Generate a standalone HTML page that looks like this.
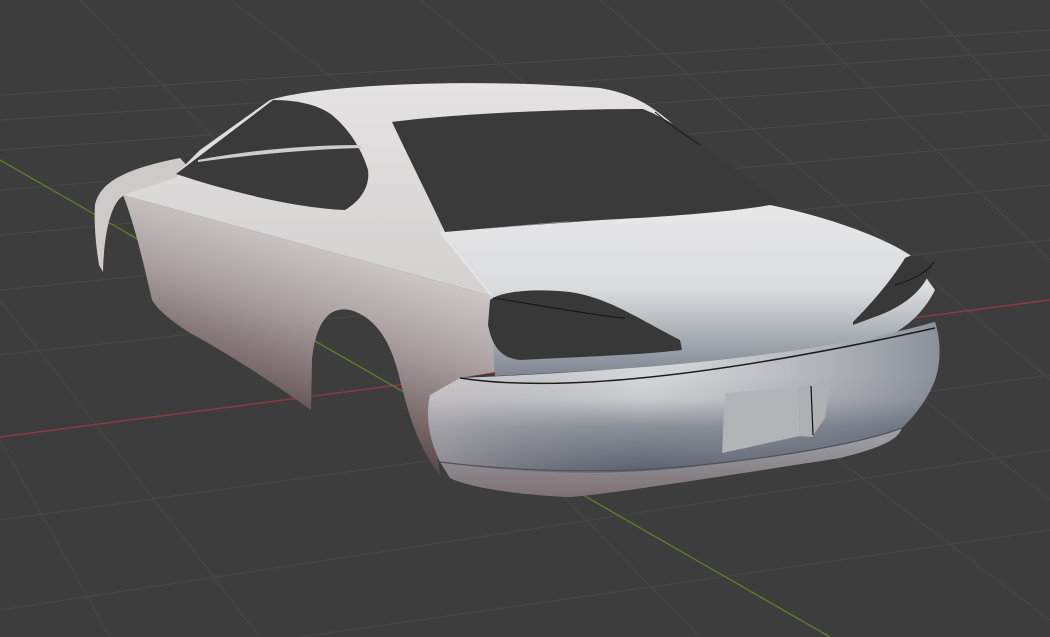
<!DOCTYPE html>
<html><head><meta charset="utf-8"><style>
html,body{margin:0;padding:0;background:#3d3d3d;overflow:hidden}
svg{display:block}
</style></head><body>
<svg width="1050" height="637" viewBox="0 0 1050 637" xmlns="http://www.w3.org/2000/svg">
<defs>
<linearGradient id="side" gradientUnits="userSpaceOnUse" x1="340" y1="230" x2="280" y2="420">
<stop offset="0" stop-color="#d4d0d0"/><stop offset="0.45" stop-color="#aa9fa0"/><stop offset="1" stop-color="#5c4a4c"/>
</linearGradient>
<linearGradient id="bump" gradientUnits="userSpaceOnUse" x1="0" y1="375" x2="0" y2="470">
<stop offset="0" stop-color="#d6d7d9"/><stop offset="0.25" stop-color="#cacbce"/><stop offset="0.55" stop-color="#8a8f98"/><stop offset="1" stop-color="#5e6370"/>
</linearGradient>
<linearGradient id="bumpH" gradientUnits="userSpaceOnUse" x1="440" y1="0" x2="940" y2="0">
<stop offset="0" stop-color="#b9b2b3" stop-opacity="0.5"/><stop offset="0.4" stop-color="#8a909a" stop-opacity="0"/><stop offset="1" stop-color="#4c5464" stop-opacity="0.55"/>
</linearGradient>
<linearGradient id="skirt" gradientUnits="userSpaceOnUse" x1="0" y1="440" x2="0" y2="500">
<stop offset="0" stop-color="#9a9ca2"/><stop offset="1" stop-color="#7c6e72"/>
</linearGradient>
<linearGradient id="trunk" gradientUnits="userSpaceOnUse" x1="0" y1="205" x2="0" y2="375">
<stop offset="0" stop-color="#e8e8e9"/><stop offset="0.5" stop-color="#dadbdd"/><stop offset="1" stop-color="#7f8792"/>
</linearGradient>
<linearGradient id="roof" x1="0" y1="0" x2="0" y2="1">
<stop offset="0" stop-color="#e4e2e2"/><stop offset="1" stop-color="#d3d0d0"/>
</linearGradient>
</defs>
<rect width="1050" height="637" fill="#3d3d3d"/>
<g stroke="#484848" stroke-width="1" fill="none">
<line x1="0" y1="95" x2="1050" y2="30"/>
<line x1="0" y1="120" x2="1050" y2="50"/>
<line x1="0" y1="150" x2="1050" y2="75"/>
<line x1="0" y1="190" x2="1050" y2="105"/>
<line x1="0" y1="235" x2="1050" y2="140"/>
<line x1="0" y1="290" x2="1050" y2="185"/>
<line x1="0" y1="355" x2="1050" y2="240"/>
<line x1="0" y1="520" x2="1050" y2="375"/>
<line x1="0" y1="610" x2="1050" y2="450"/>
<line x1="300" y1="637" x2="1050" y2="530"/>
<line x1="0" y1="300" x2="260" y2="637"/>
<line x1="0" y1="440" x2="110" y2="637"/>
<line x1="80" y1="0" x2="700" y2="637"/>
<line x1="230" y1="0" x2="1050" y2="620"/>
<line x1="420" y1="0" x2="1050" y2="500"/>
<line x1="600" y1="0" x2="1050" y2="380"/>
<line x1="780" y1="0" x2="1050" y2="260"/>
<line x1="920" y1="0" x2="1050" y2="140"/>
</g>
<line x1="0" y1="437" x2="1050" y2="300" stroke="#8a3a45" stroke-width="1.5"/>
<line x1="0" y1="160" x2="830" y2="637" stroke="#5c7a2a" stroke-width="1.5"/>
<!-- front fender sliver -->
<path d="M95,205 C100,180 130,168 180,158 L200,180 L125,195 C112,200 104,230 103,272 L99,265 C95,240 94,220 95,205 Z" fill="#cfcaca"/>
<!-- side panel incl. rear quarter -->
<path d="M123,195 L492,296 L495,372 L460,378 L430,400 L440,475 C420,450 410,420 400,380 C392,345 378,318 350,310 C325,305 315,330 312,360 L311,410 C290,395 240,360 190,333 C170,320 158,310 152,300 C145,270 135,225 123,195 Z" fill="url(#side)"/>
<!-- upper side / roof -->
<path d="M178,172 L200,150 L270,100 C320,84 480,78 600,88 C640,95 660,110 700,150 L770,205 L445,232 L492,296 L123,195 L178,177 Z" fill="url(#roof)"/>
<!-- trunk -->
<path d="M440,232 L600,220 L770,205 C820,215 880,235 910,255 L935,290 C915,330 880,340 860,350 L700,365 L495,376 L490,296 Z" fill="url(#trunk)"/>
<path d="M440,232 L492,296" stroke="#f2f2f2" stroke-width="1" opacity="0.6"/>
<!-- bumper -->
<path d="M460,378 C600,372 800,360 935,322 C942,345 940,365 935,380 C925,405 910,420 900,430 C840,455 700,472 570,482 C520,480 470,472 440,462 C430,440 425,420 430,395 Z" fill="url(#bump)"/>
<path d="M460,378 C600,372 800,360 935,322 C942,345 940,365 935,380 C925,405 910,420 900,430 C840,455 700,472 570,482 C520,480 470,472 440,462 C430,440 425,420 430,395 Z" fill="url(#bumpH)"/>
<path d="M440,462 C520,475 620,476 700,466 C800,455 870,440 902,428 C898,440 880,448 840,458 C700,480 600,495 570,497 C520,495 470,488 450,478 Z" fill="url(#skirt)"/>
<path d="M460,378 C550,392 700,380 935,328" stroke="#1d1d1d" stroke-width="1.5" fill="none"/>
<path d="M440,462 C520,472 620,474 700,465 C800,455 870,440 902,428" stroke="#4e525c" stroke-width="1.2" fill="none"/>
<!-- side window -->
<path d="M176,174 L273,100 C300,100 320,106 332,115 C350,130 362,150 368,170 C370,185 362,200 345,210 C300,208 240,195 176,174 Z" fill="#3a3a3a"/>
<path d="M198,160 C250,150 310,145 360,145 L362,148 C310,149 250,155 198,162 Z" fill="#cfcccc"/>
<!-- rear window -->
<path d="M392,122 C450,114 560,109 643,109 C670,120 690,135 710,150 L780,203 C740,212 650,218 560,222 L445,232 C430,200 410,160 392,122 Z" fill="#3a3a3a"/>
<path d="M655,112 C670,125 685,135 700,145" stroke="#1a1a1a" stroke-width="1" fill="none"/>
<!-- taillights -->
<path d="M490,300 C500,292 530,288 570,292 C610,298 640,320 680,340 L682,350 C640,355 580,357 520,360 C500,358 492,345 488,325 Z" fill="#383838"/>
<path d="M493,298 C540,305 590,315 625,318" stroke="#111" stroke-width="1" fill="none"/>
<path d="M853,322 C875,300 895,275 905,258 C915,252 925,258 932,266 C925,290 905,305 880,315 L853,325 Z" fill="#383838"/>
<path d="M895,285 C912,280 928,272 934,262" stroke="#111" stroke-width="1" fill="none"/>
<!-- plate -->
<path d="M798,387 L830,385 L825,418 L812,437 L800,436 Z" fill="#aeb0b3"/>
<path d="M725,393 L798,387 L800,436 L722,453 Z" fill="#b2b4b7"/>
<path d="M811,386 L813,435" stroke="#111" stroke-width="1.2"/>
</svg>
</body></html>
